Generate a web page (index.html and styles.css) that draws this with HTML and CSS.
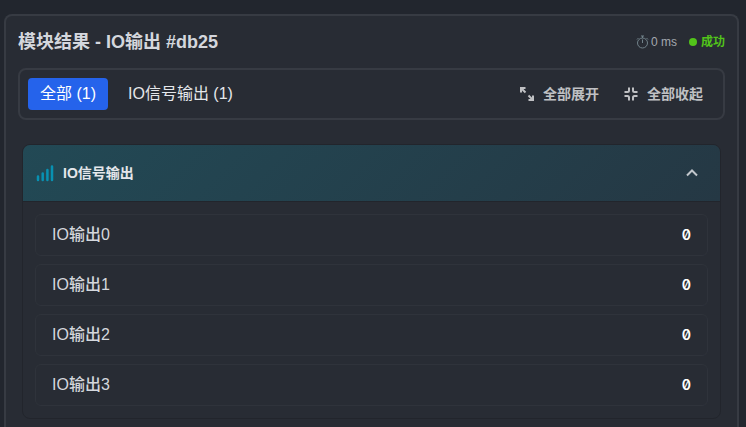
FILE: index.html
```html
<!DOCTYPE html>
<html lang="zh-CN">
<head>
    <meta charset="UTF-8">
    <meta name="viewport" content="width=device-width, initial-scale=1.0">
    <title>模块结果</title>
    <link rel="stylesheet" href="styles.css">
</head>
<body>
    <main class="result-panel">
        <header class="panel-header">
            <h1>模块结果 - IO输出 #db25</h1>
            <div class="panel-meta">
                <span class="duration">
                    <svg class="icon-timer" viewBox="0 0 13 14" width="13" height="14" aria-hidden="true">
                        <circle cx="6.5" cy="8" r="5"/>
                        <path d="M5 1h3M6.5 1v2M6.5 4.5V8M10.5 3l1.5 1.5M2.5 3L1 4.5"/>
                    </svg>
                    0 ms
                </span>
                <span class="status">成功</span>
            </div>
        </header>

        <div class="toolbar">
            <div class="tabs">
                <button type="button" class="tab active">全部 (1)</button>
                <button type="button" class="tab">IO信号输出 (1)</button>
            </div>
            <div class="actions">
                <button type="button" class="action-btn">
                    <svg viewBox="0 0 16 16" width="16" height="16" aria-hidden="true">
                        <path d="M2 6.5V2h4.500M2 2l4.500 4.500M14 9.500V14H9.500M14 14L9.500 9.500"/>
                    </svg>
                    全部展开
                </button>
                <button type="button" class="action-btn">
                    <svg viewBox="0 0 16 16" width="16" height="16" aria-hidden="true">
                        <path d="M6 1.500V4.500Q6 6 4.500 6H1.500M10 1.500V4.500Q10 6 11.500 6H14.500M6 14.500V11.500Q6 10 4.500 10H1.500M10 14.500V11.500Q10 10 11.500 10H14.500"/>
                    </svg>
                    全部收起
                </button>
            </div>
        </div>

        <section class="group">
            <button type="button" class="group-header" aria-expanded="true">
                <svg class="icon-signal" viewBox="0 0 18 18" width="18" height="18" aria-hidden="true">
                    <path d="M2 12.500V16M6.700 9.500V16M11.400 6V16M16 2.500V16"/>
                </svg>
                <span class="group-title">IO信号输出</span>
                <svg class="icon-chevron" viewBox="0 0 16 16" width="16" height="16" aria-hidden="true">
                    <path d="M3 10.500l5-5 5 5"/>
                </svg>
            </button>
            <dl class="signal-list">
                <div class="signal-row"><dt>IO输出0</dt><dd>0</dd></div>
                <div class="signal-row"><dt>IO输出1</dt><dd>0</dd></div>
                <div class="signal-row"><dt>IO输出2</dt><dd>0</dd></div>
                <div class="signal-row"><dt>IO输出3</dt><dd>0</dd></div>
            </dl>
        </section>
    </main>
</body>
</html>
```

FILE: styles.css
```css
/* Reset and Base Styles */
* {
    margin: 0;
    padding: 0;
    box-sizing: border-box;
}

body {
    background: #22262e;
    color: #d4d7dd;
    font-family: "Liberation Sans", "Noto Sans CJK SC", sans-serif;
    font-size: 16px;
    line-height: 24px;
    padding: 14px 7px 0 4px;
}

button {
    background: none;
    border: none;
    color: inherit;
    font: inherit;
    cursor: pointer;
}

svg {
    flex: none;
    fill: none;
    stroke: currentColor;
}

/* Panel */
.result-panel {
    background: #282c34;
    border: 2px solid #373b43;
    border-bottom: none;
    border-radius: 8px 8px 0 0;
    padding: 12px 12px 8px;
}

.panel-header {
    display: flex;
    align-items: center;
    justify-content: space-between;
    margin-bottom: 14px;
    padding-top: 2px;
}

.panel-header h1 {
    font-size: 18px;
    line-height: 24px;
    font-weight: 700;
}

.panel-meta {
    display: flex;
    align-items: center;
    gap: 12px;
    font-size: 12px;
    line-height: 16px;
}

.duration,
.status {
    display: flex;
    align-items: center;
}

.duration {
    gap: 2px;
    color: #a4a8af;
}

.icon-timer {
    color: #71828a;
}

.status {
    gap: 4px;
    color: #52c41a;
    font-weight: 700;
}

.status::before {
    content: "";
    width: 8px;
    height: 8px;
    border-radius: 50%;
    background: #52c41a;
}

/* Toolbar */
.toolbar {
    display: flex;
    align-items: center;
    justify-content: space-between;
    border: 2px solid #373b43;
    border-radius: 8px;
    padding: 8px;
    margin-bottom: 24px;
}

.tabs,
.actions {
    display: flex;
    gap: 8px;
}

.tab {
    height: 32px;
    padding: 0 12px;
    border-radius: 4px;
    color: #e5e7eb;
    white-space: nowrap;
}

.tab.active {
    background: #2563eb;
    color: #fff;
}

.action-btn {
    display: flex;
    align-items: center;
    gap: 8px;
    height: 32px;
    padding: 0 8px;
    color: #bfc0c3;
    font-size: 14px;
    font-weight: 700;
    white-space: nowrap;
}

.actions {
    padding-right: 4px;
}

.action-btn svg {
    stroke-width: 2;
}

/* Signal Group */
.group {
    margin: 0 4px;
    border: 1px solid #22252c;
    border-radius: 8px;
    overflow: hidden;
}

.group-header {
    display: flex;
    align-items: center;
    gap: 9px;
    width: 100%;
    height: 57px;
    padding: 0 20px 0 13px;
    background: linear-gradient(135deg, #224955, #253844);
    border-bottom: 1px solid #22252c;
    color: #e5e7eb;
    font-size: 14px;
    font-weight: 700;
}

.group-title {
    flex: 1;
    text-align: left;
}

.icon-signal {
    color: #0891b2;
    stroke-width: 2.5;
    stroke-linecap: round;
}

.icon-chevron {
    color: #c2c7cc;
    stroke-width: 2;
}

.signal-list {
    display: flex;
    flex-direction: column;
    gap: 8px;
    padding: 12px;
}

.signal-row {
    display: flex;
    align-items: center;
    justify-content: space-between;
    height: 42px;
    padding: 0 16px;
    border: 1px solid #2f333b;
    border-radius: 6px;
    font-weight: 500;
}

.signal-row dd {
    color: #fff;
    font-family: Inter, monospace;
    font-size: 14px;
    font-weight: 600;
    font-feature-settings: "zero";
}
```
